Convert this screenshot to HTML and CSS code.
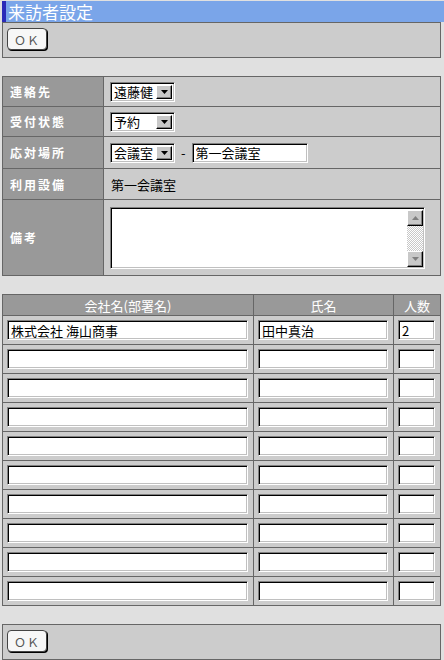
FILE: index.html
```html
<!DOCTYPE html>
<html lang="ja">
<head>
    <meta charset="UTF-8">
    <title>来訪者設定</title>
    <link rel="stylesheet" href="styles.css">
</head>
<body>
    <div class="title-bar">
        <h1>来訪者設定</h1>
    </div>

    <div class="toolbar">
        <button class="ok-button" type="button">ＯＫ</button>
    </div>

    <table class="form-table">
        <tr class="row-select">
            <th>連絡先</th>
            <td>
                <span class="combo">
                    <select><option>遠藤健</option></select>
                    <span class="combo-arrow"><svg width="7" height="4" viewBox="0 0 7 4"><path d="M0 0h7L3.5 4z" fill="#000"/></svg></span>
                </span>
            </td>
        </tr>
        <tr class="row-select">
            <th>受付状態</th>
            <td>
                <span class="combo">
                    <select><option>予約</option></select>
                    <span class="combo-arrow"><svg width="7" height="4" viewBox="0 0 7 4"><path d="M0 0h7L3.5 4z" fill="#000"/></svg></span>
                </span>
            </td>
        </tr>
        <tr class="row-place">
            <th>応対場所</th>
            <td>
                <div class="place">
                    <span class="combo">
                        <select><option>会議室</option></select>
                        <span class="combo-arrow"><svg width="7" height="4" viewBox="0 0 7 4"><path d="M0 0h7L3.5 4z" fill="#000"/></svg></span>
                    </span>
                    <span class="dash">-</span>
                    <input class="text-input room-input" type="text" value="第一会議室">
                </div>
            </td>
        </tr>
        <tr class="row-text">
            <th>利用設備</th>
            <td>第一会議室</td>
        </tr>
        <tr class="row-memo">
            <th>備考</th>
            <td>
                <div class="memo">
                    <textarea></textarea>
                    <div class="scrollbar">
                        <span class="scroll-button"><svg width="7" height="4" viewBox="0 0 7 4"><path d="M3.5 0L7 4H0z" fill="#808080"/></svg></span>
                        <span class="scroll-track"></span>
                        <span class="scroll-button"><svg width="7" height="4" viewBox="0 0 7 4"><path d="M0 0h7L3.5 4z" fill="#808080"/></svg></span>
                    </div>
                </div>
            </td>
        </tr>
    </table>

    <table class="visitor-table">
        <colgroup>
            <col class="col-company">
            <col class="col-name">
            <col class="col-count">
        </colgroup>
        <thead>
            <tr>
                <th>会社名(部署名)</th>
                <th>氏名</th>
                <th>人数</th>
            </tr>
        </thead>
        <tbody id="visitorRows">
            <tr>
                <td><input class="text-input" type="text" value="株式会社 海山商事"></td>
                <td><input class="text-input" type="text" value="田中真治"></td>
                <td><input class="text-input" type="text" value="2"></td>
            </tr>
        </tbody>
    </table>

    <div class="toolbar">
        <button class="ok-button" type="button">ＯＫ</button>
    </div>

    <script>
        // Fill the remaining empty visitor rows
        const rows = document.getElementById('visitorRows');
        for (let i = 0; i < 9; i++) {
            const tr = document.createElement('tr');
            tr.innerHTML = '<td><input class="text-input" type="text"></td>' +
                '<td><input class="text-input" type="text"></td>' +
                '<td><input class="text-input" type="text"></td>';
            rows.appendChild(tr);
        }
    </script>
</body>
</html>
```

FILE: styles.css
```css
* {
    margin: 0;
    padding: 0;
    box-sizing: border-box;
}

body {
    font-family: "Noto Sans CJK JP", sans-serif;
    font-size: 13px;
    color: #000;
    background: #e0e0e0;
    padding: 1px 3px 0 2px;
}

.title-bar {
    background: #7aa5e9;
    border-left: 4px solid #2a2ab8;
    height: 21px;
    margin-right: -3px;
}

.title-bar h1 {
    color: #fff;
    font-size: 17px;
    font-weight: normal;
    line-height: 21px;
    padding-left: 2px;
}

.toolbar {
    background: #ccc;
    border: 1px solid #666;
    height: 36px;
    padding: 5px 4px;
}

.ok-button {
    display: block;
    width: 40px;
    height: 22px;
    background: #f7f7f7;
    border: 1px solid #444;
    border-radius: 4px;
    box-shadow: 1px 1px 0 #000;
    font-family: "Noto Sans CJK JP", sans-serif;
    font-size: 12px;
    color: #555;
    letter-spacing: 1px;
    cursor: pointer;
}

/* form */

.form-table {
    width: 100%;
    border-collapse: collapse;
    margin: 18px 0;
    border: 1px solid #666;
}

.form-table th {
    width: 101px;
    background: #999;
    color: #fff;
    font-size: 12px;
    font-weight: bold;
    letter-spacing: 2px;
    text-align: left;
    padding-left: 7px;
    border: 1px solid #666;
}

.form-table td {
    background: #ccc;
    padding: 0 6px;
    border: 1px solid #666;
}

.row-select td {
    height: 30px;
}

.row-place td {
    height: 32px;
}

.row-text td {
    height: 31px;
    padding-left: 7px;
}

.row-memo td {
    height: 76px;
}

.combo {
    display: inline-flex;
    width: 65px;
    height: 20px;
    background: #fff;
    border: 1px solid;
    border-color: #808080 #fff #fff #808080;
    box-shadow: inset 1px 1px #000, inset -1px -1px #c0c0c0;
    padding: 2px;
    vertical-align: middle;
}

.combo select {
    appearance: none;
    -webkit-appearance: none;
    flex: 1;
    min-width: 0;
    border: none;
    background: #fff;
    font-family: "Noto Sans CJK JP", sans-serif;
    font-size: 13px;
    line-height: 14px;
    padding-left: 1px;
    outline: none;
}

.combo-arrow {
    display: flex;
    align-items: center;
    justify-content: center;
    width: 16px;
    background: #c8c8c8;
    border: 1px solid;
    border-color: #fff #000 #000 #fff;
    box-shadow: inset -1px -1px #808080;
}

.place {
    display: flex;
    align-items: center;
}

.dash {
    margin: 0 6px;
}

.text-input {
    display: block;
    width: 100%;
    height: 20px;
    background: #fff;
    border: 1px solid;
    border-color: #808080 #fff #fff #808080;
    box-shadow: inset 1px 1px #000, inset -1px -1px #c0c0c0;
    font-family: "Noto Sans CJK JP", sans-serif;
    font-size: 13px;
    padding: 0 3px;
    outline: none;
}

.room-input {
    width: 116px;
}

.memo {
    display: flex;
    width: 315px;
    height: 62px;
    background: #fff;
    border: 1px solid;
    border-color: #808080 #fff #fff #808080;
    box-shadow: inset 1px 1px #000, inset -1px -1px #c0c0c0;
    padding: 2px 1px 1px 2px;
}

.memo textarea {
    flex: 1;
    border: none;
    resize: none;
    outline: none;
    font-family: "Noto Sans CJK JP", sans-serif;
    font-size: 13px;
}

.scrollbar {
    display: flex;
    flex-direction: column;
    width: 16px;
}

.scroll-button {
    display: flex;
    align-items: center;
    justify-content: center;
    height: 16px;
    background: #c8c8c8;
    border: 1px solid;
    border-color: #fff #000 #000 #fff;
    box-shadow: inset -1px -1px #808080;
}

.scroll-track {
    flex: 1;
    background: repeating-conic-gradient(#fff 0 25%, #c8c8c8 0 50%) 0 0 / 2px 2px;
}

/* visitor list */

.visitor-table {
    width: 100%;
    table-layout: fixed;
    border-collapse: collapse;
    border: 1px solid #666;
    margin-bottom: 18px;
}

.col-company {
    width: 251px;
}

.col-name {
    width: 140px;
}

.visitor-table th {
    height: 21px;
    background: #999;
    color: #fff;
    font-weight: normal;
    border: 1px solid #666;
}

.visitor-table td {
    background: #ccc;
    padding: 4px 5px 4px 4px;
    border: 1px solid #666;
}
```
